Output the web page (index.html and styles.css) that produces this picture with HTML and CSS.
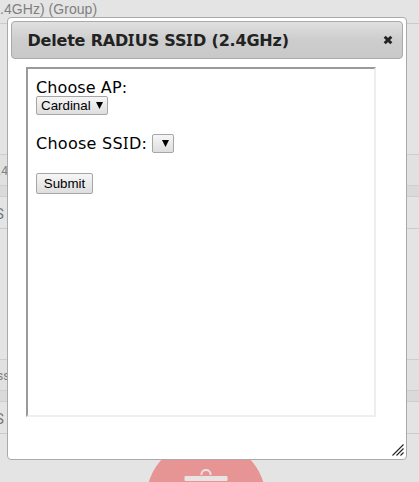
FILE: index.html
```html
<!DOCTYPE html>
<html lang="en">
<head>
<meta charset="utf-8">
<title>Delete RADIUS SSID</title>
<link rel="stylesheet" href="styles.css">
</head>
<body>
<div class="page">
  <div class="crumb">.4GHz) (Group)</div>
  <div class="space first"></div>
  <div class="row head"><span class="small">.4</span></div>
  <div class="strip"></div>
  <div class="row"><span class="ess">S</span></div>
  <div class="space"></div>
  <div class="row head"><span class="small ss">ss</span></div>
  <div class="strip"></div>
  <div class="row"><span class="ess">S</span></div>
  <svg class="trash" width="122" height="48" viewBox="0 0 122 48"><circle cx="61" cy="66" r="60" fill="#e69494"/><path d="M56.5 41v-1a4.5 4 0 0 1 9 0v1" fill="none" stroke="#e8e4e4" stroke-width="2"/><rect x="39.5" y="42" width="43" height="5" rx="1" fill="#e8e4e4"/></svg>
</div>
<div class="dialog">
  <div class="titlebar"><span class="title">Delete RAD<span class="serif-i">I</span>US SS<span class="serif-i">I</span>D (2.4GHz)</span>
    <svg class="close" width="10" height="10" viewBox="0 0 10 10"><path d="M1.7 1.7l6.6 6.6M8.3 1.7L1.7 8.3" stroke="#222" stroke-width="2.9"/></svg>
  </div>
  <div class="frame">
    <div class="line"><span class="ap">Choose AP:</span></div>
    <div class="select">Cardinal<svg width="7" height="7" viewBox="0 0 7 7"><path d="M0 0h7L3.5 7z"/></svg></div>
    <div class="line second"><span class="ssid">Choose SS<span class="serif-i">I</span>D:</span><div class="select empty"><svg width="7" height="7" viewBox="0 0 7 7"><path d="M0 0h7L3.5 7z"/></svg></div></div>
    <button class="submit">Submit</button>
  </div>
  <svg class="grip" width="12" height="12" viewBox="0 0 12 12"><path d="M.5 11.5l11-11M4.5 11.5l7-7M8.5 11.5l3-3" stroke="#222" stroke-width="1.1"/></svg>
</div>
</body>
</html>
```
FILE: styles.css
```css
* { box-sizing: border-box; }
body { margin: 0; width: 419px; height: 482px; overflow: hidden; background: #e4e4e4; position: relative; }
.page { height: 482px; font-family: Roboto, sans-serif; color: #808080; overflow: hidden; position: relative; }
.crumb { height: 24px; border-bottom: 1px solid #cbcbcb; font: 14px/18px "Liberation Sans", sans-serif; white-space: nowrap; letter-spacing: 0.05px; }
.space { height: 130px; }
.row { height: 33px; border-bottom: 1px solid #cbcbcb; display: flex; align-items: center; }
.row.head { height: 32px; border-top: 1px solid #cecece; border-bottom-color: #cecece; background: #e1e1e1; }
.strip { height: 11px; background: #dadada; border-bottom: 1px solid #cecece; }
.strip + .row { height: 32px; }
.small { font-size: 12px; margin-left: -2px; padding-top: 2px; }
.small.ss { margin-left: -3px; }
.ess { font-size: 15px; margin-left: -5px; padding-top: 2px; color: #777; }
.trash { position: absolute; left: 145px; top: 434px; }
.dialog { position: absolute; left: 7px; top: 17px; width: 400px; height: 443px; padding: 3px; background: #fff; border: 1px solid #aaa; border-radius: 4px; }
.titlebar { height: 38px; border: 1px solid #aaa; border-radius: 4px; background: linear-gradient(#e0e0e0, #cdcdcd 50%, #c9c9c9); display: flex; align-items: center; justify-content: space-between; padding: 0 9px 0 15.5px; }
.title { font: bold 16px/22px "DejaVu Sans", sans-serif; color: #222; white-space: nowrap; letter-spacing: -0.2px; padding-top: 2px; }
.serif-i { font-family: "Noto Sans", sans-serif; line-height: 1; letter-spacing: 0.6px; }
.frame { width: 350px; height: 350px; margin: 8px 0 0 15px; border: 2px solid; border-color: #9a9a9a #eee #eee #9a9a9a; padding: 8px; font: 16px/19px "DejaVu Sans", sans-serif; color: #000; }
.line { height: 19px; display: flex; align-items: center; gap: 5px; white-space: nowrap; }
.line.second { margin: 19px 0 20px; }
.select { width: 72px; height: 19px; border: 1px solid #a6a6a6; border-radius: 2px; background: linear-gradient(#f6f6f6, #dedede); display: flex; align-items: center; justify-content: space-between; padding: 0 4px 0 4px; font: 13.33px/17px "Liberation Sans", sans-serif; }
.select svg { width: 7px; height: 7px; margin-bottom: 1px; }
.ap, .ssid { display: block; }
.ap { padding-top: 2px; letter-spacing: 0.1px; }
.ssid { width: 111px; letter-spacing: 0.27px; }
.select.empty { width: 22px; justify-content: flex-end; padding-right: 4px; }
.submit { display: block; width: 57px; height: 21px; padding: 0; border: 1px solid #a6a6a6; border-radius: 2px; background: linear-gradient(#f6f6f6, #dedede); font: 13.33px/19px "Liberation Sans", sans-serif; color: #000; }
.grip { position: absolute; right: 2px; bottom: 3px; }
```
